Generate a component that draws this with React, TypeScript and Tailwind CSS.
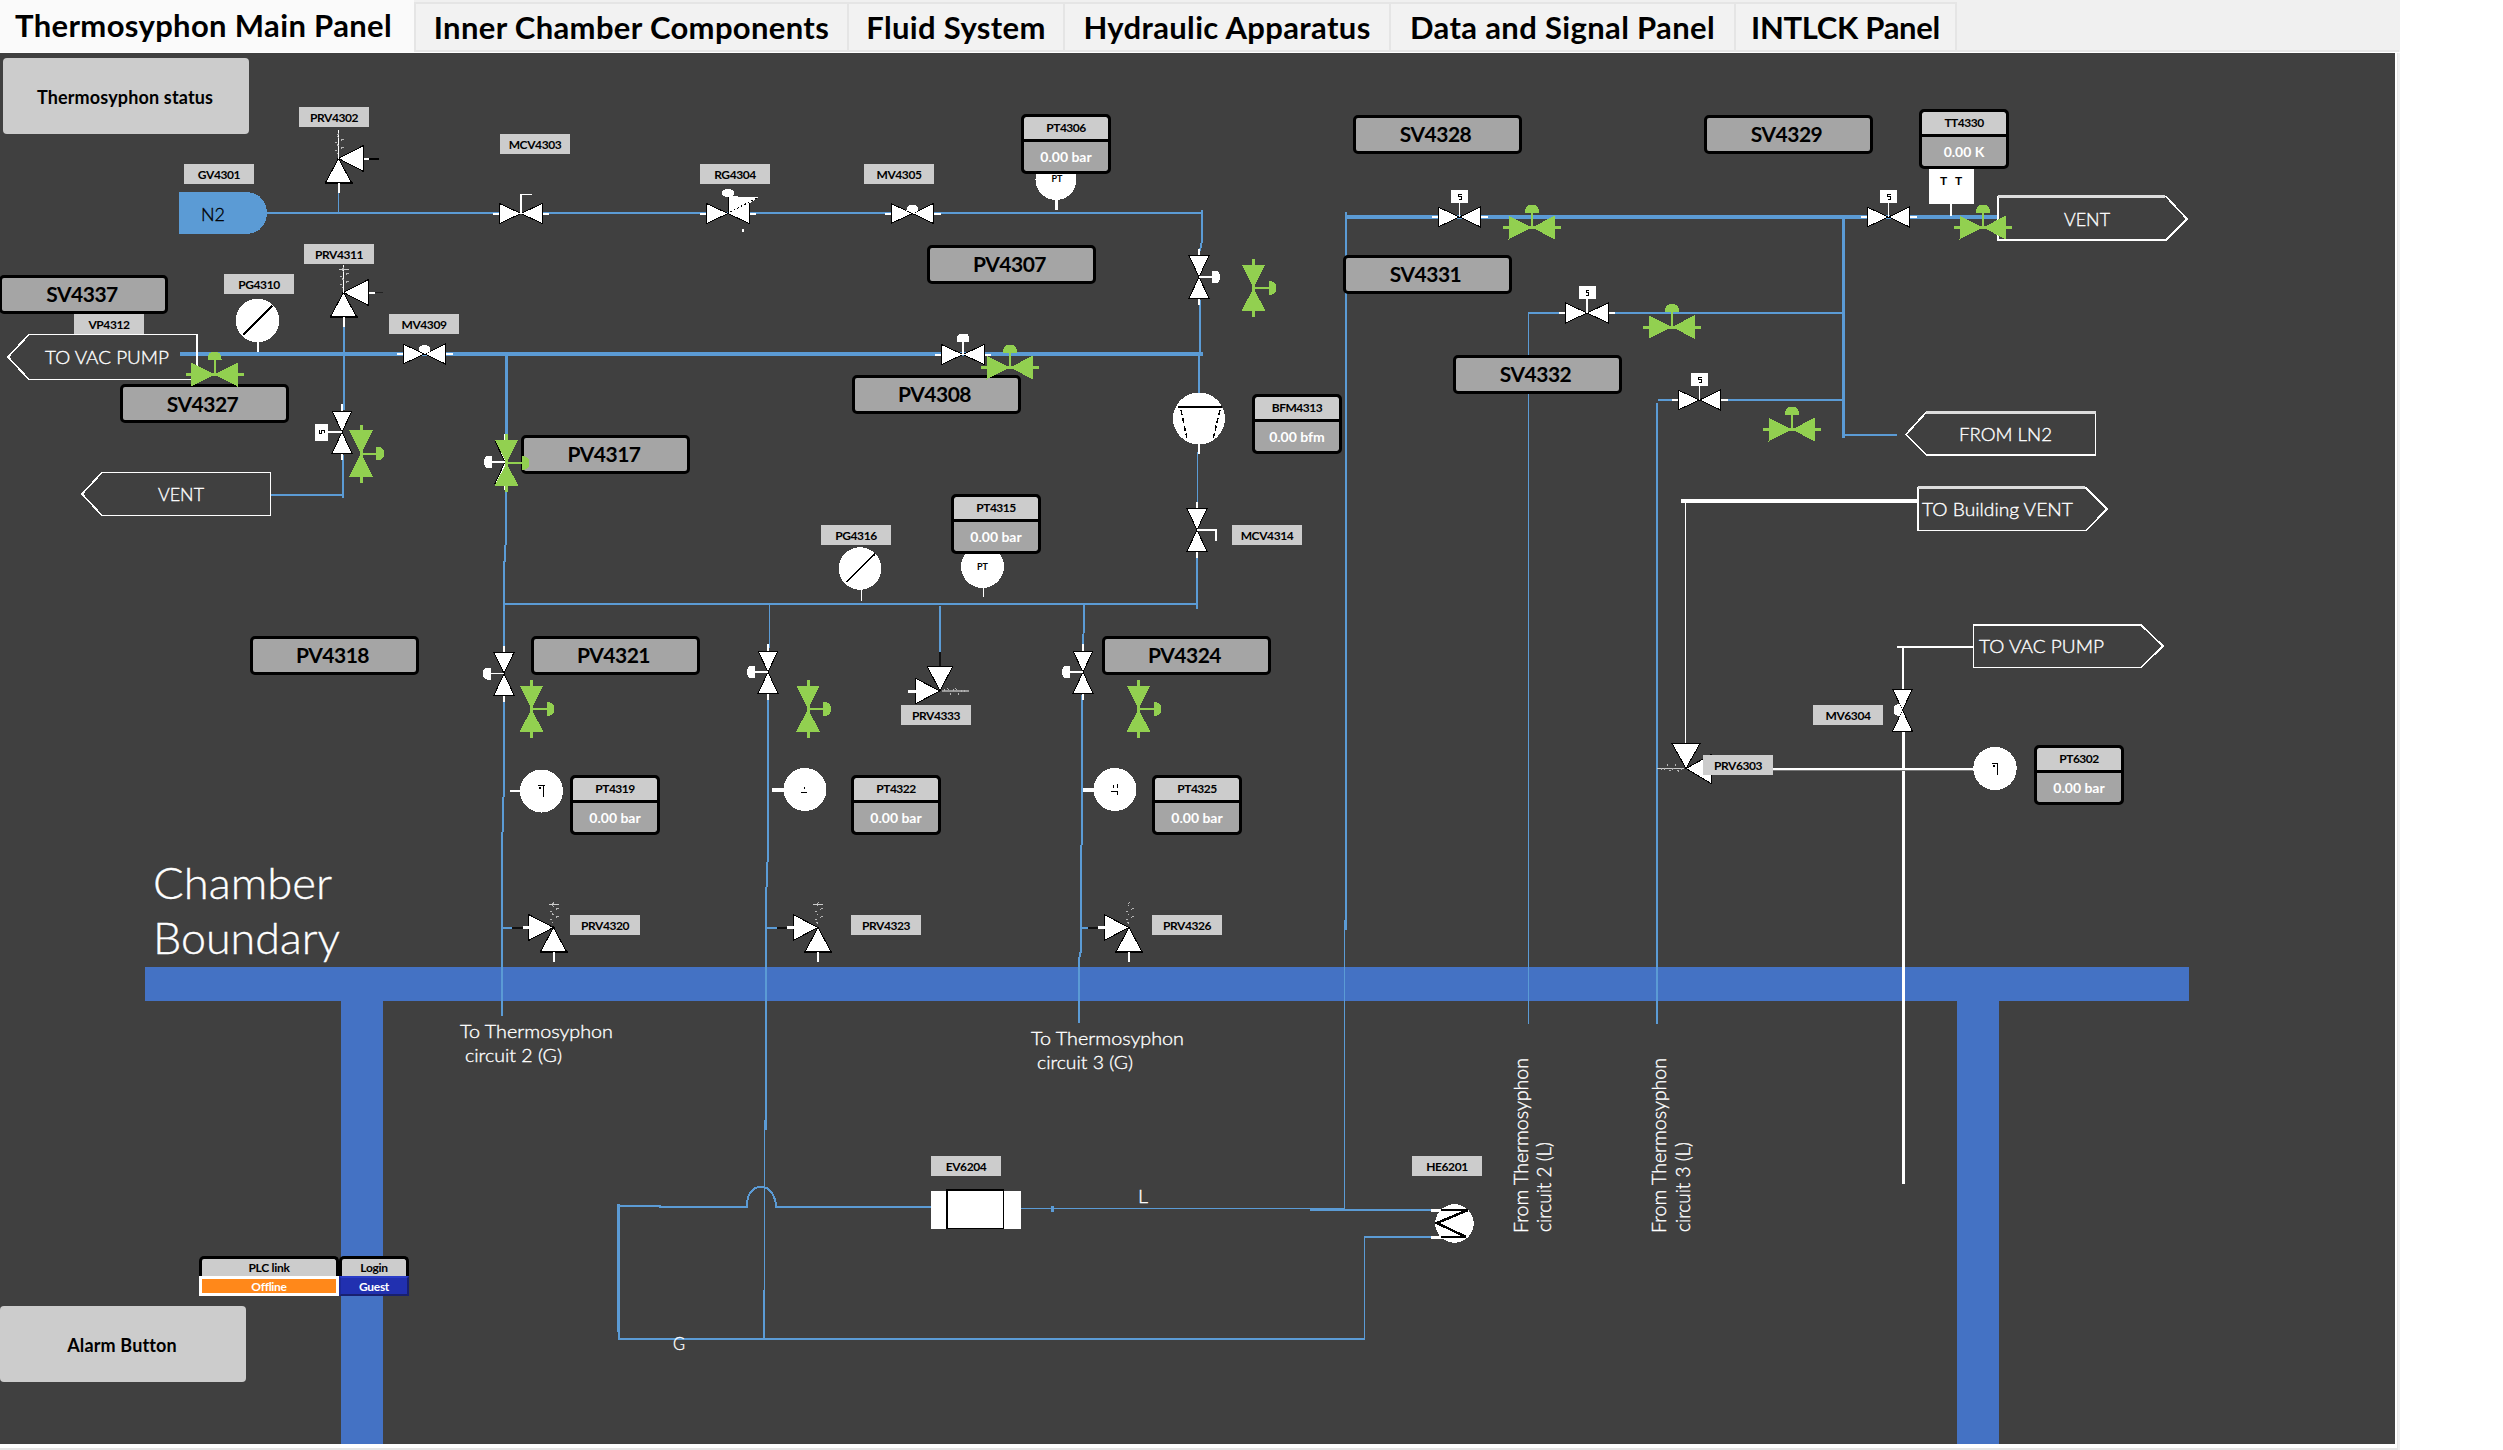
import React from "react";

const TOP = 53;
const PIPE = "#5b9bd5";
const GREEN = "#92d050";
const WALL = "#4472c4";

type P = { x: number; y: number };

/* ---------- HTML nodes placed on the mimic canvas ---------- */

function Tag({ x, y, children }: P & { children: string }) {
  return (
    <div
      className="absolute flex h-5 w-[70px] items-center justify-center bg-[#cccccc] pt-0.5 text-xs font-bold tracking-[-0.4px] text-black"
      style={{ left: x, top: y - TOP }}
    >
      {children}
    </div>
  );
}

function ValveButton({ x, y, children }: P & { children: string }) {
  return (
    <button
      className="absolute flex h-[39px] w-[169px] items-center justify-center rounded-[5px] border-[3px] border-black bg-[#a5a5a5] pr-[3px] text-[21px] font-bold tracking-[-0.5px] text-black"
      style={{ left: x, top: y - TOP }}
    >
      {children}
    </button>
  );
}

function Readout({ x, y, name, value }: P & { name: string; value: string }) {
  return (
    <div
      className="absolute flex h-[60px] w-[90px] flex-col gap-[3px] overflow-hidden rounded-[5px] border-[3px] border-black bg-black text-center font-bold"
      style={{ left: x, top: y - TOP }}
    >
      <div className="flex h-[22px] items-center justify-center rounded-t-[2px] bg-[#cccccc] text-xs tracking-[-0.5px] text-black">{name}</div>
      <div className="flex flex-1 items-center justify-center rounded-b-[2px] bg-[#a5a5a5] text-sm text-white">{value}</div>
    </div>
  );
}

/* ---------- SVG symbols ---------- */

type Head = "none" | "dome" | "box" | "cap" | "lever";

function Valve({ x, y, rot = 0, head = "none" }: P & { rot?: number; head?: Head }) {
  return (
    <g transform={`translate(${x} ${y}) rotate(${rot})`}>
      <path d="M-28 0H-20M20 0H28" stroke="#fff" strokeWidth="2" />
      <path d="M-21.500 -10V10L0 0L21 -10V10L0 0Z" fill="#fff" stroke="#000" strokeWidth="1" />
      <path d="M-20.500 -9V9L-1 0ZM20.500 -9V9L1 0Z" fill="#fff" />
      {head === "dome" && (
        <>
          <path d="M0 0V-14" stroke="#fff" strokeWidth="1.500" />
          <path d="M-6 -13V-17Q-6 -21 0 -21Q6 -21 6 -17V-13Z" fill="#fff" />
        </>
      )}
      {head === "cap" && <path d="M-6 -3Q-6 -9 0 -9Q6 -9 6 -3L0 0Z" fill="#fff" />}
      {head === "box" && (
        <>
          <path d="M0 0V-14" stroke="#fff" strokeWidth="1.500" />
          <rect x="-8.500" y="-27" width="17" height="13" fill="#fff" />
          <path d="M2 -23H-1V-20.500H1.500V-18H-1" fill="none" stroke="#000" strokeWidth="1" />
        </>
      )}
      {head === "lever" && <path d="M0 0V-19H10.500" fill="none" stroke="#fff" strokeWidth="1.500" />}
    </g>
  );
}

function GreenValve({ x, y, rot = 0 }: P & { rot?: number }) {
  return (
    <g transform={`translate(${x} ${y}) rotate(${rot})`} fill={GREEN} stroke="none">
      <path d="M-23.500 -12V12L0 0L23 -12V12L0 0Z" />
      <rect x="-29" y="-1.500" width="58" height="3" />
      <rect x="-1" y="-16" width="2" height="16" />
      <path d="M-7 -15Q-7 -23 0 -23Q7 -23 7 -15Z" />
    </g>
  );
}

/* Relief valve: inlet triangle below the apex, outlet triangle to the given side. */
function Relief({ x, y, side, tail }: P & { side: 1 | -1; tail: React.ReactNode }) {
  return (
    <g transform={`translate(${x} ${y})`}>
      <path d="M0 0L-13 24H13Z" fill="#fff" stroke="#000" strokeWidth="1" />
      <path d="M-14 24.500H14" stroke="#000" strokeWidth="1.500" />
      <path d="M0 1L-12 23.500H12Z" fill="#fff" />
      <path d={side === 1 ? "M0 0L25 -13V13Z" : "M0 0L-25 -13V13Z"} fill="#fff" stroke="#000" strokeWidth="1" />
      <path d="M0 24V34" stroke="#fff" strokeWidth="2" />
      {tail}
    </g>
  );
}

const Spring = ({ cap = false }: { cap?: boolean }) => (
  <g fill="none" stroke="#b5b5b5" strokeWidth="1">
    <path d="M0 -4L-4 -7L4 -11L-4 -15L4 -19L-3 -23L3 -26" strokeDasharray="2 4" />
    {cap && <path d="M-5 -23H5" stroke="#ccc" strokeWidth="1" />}
  </g>
);

function Txt({ x, y, w, size = 18.5, children, fill = "#fff", rot = 0 }: P & { w: number; size?: number; children: string; fill?: string; rot?: number }) {
  return (
    <text
      transform={`translate(${x} ${y}) rotate(${rot})`}
      textLength={w}
      lengthAdjust="spacingAndGlyphs"
      fontSize={size}
      fill={fill}
      stroke={fill}
      strokeWidth="0.35"
      className="font-light"
    >
      {children}
    </text>
  );
}

/* [path, width, colour] */
const PIPES: [string, number, string?][] = [
  ["M267 213H1202", 2],
  ["M338.500 190V213", 1.5],
  ["M1202 210V240L1200 251M1200 300L1199.500 353", 2],
  ["M180 354H1203", 4],
  ["M1199 354V394", 2],
  ["M1197.500 452V502", 1],
  ["M1196.500 551V609", 2],
  ["M343.500 326V410M342.500 455V498", 2],
  ["M271 495H343", 2],
  ["M506.500 355V434", 3],
  ["M505.500 434V545L504 570V780L502 850V1016", 2],
  ["M504 604H1196", 2],
  ["M769.500 604V648", 1],
  ["M768 695V850L766 900V1130", 2],
  ["M764.500 1120V1310", 1],
  ["M763.500 1290V1339", 2],
  ["M940 606V652", 2],
  ["M940 652V666", 2, "#111"],
  ["M1084 604V620L1083 648", 2],
  ["M1082 695V840L1081 850V950L1079 960V1023", 2],
  ["M502 928H512M767 928H777M1081 928H1088", 2],
  ["M512 928H524M777 928H787M1088 928H1099", 2, "#111"],
  ["M1344.500 217H1997", 4],
  ["M1346 212V930", 2],
  ["M1344.500 920V1209", 1],
  ["M1843.500 217V438", 3],
  ["M1843 435H1897", 2],
  ["M1528.500 313V1024", 1],
  ["M1528 313H1843", 2],
  ["M1657 403V1024", 2],
  ["M1658 400H1843", 2],
  ["M618 1206H660V1207H746M776 1207H931", 2],
  ["M746.500 1208C747 1194 752 1187 761 1187C770 1187 775 1194 776.500 1208", 2],
  ["M1021 1208.500H1345", 1],
  ["M1052.500 1205.500V1211.500", 3],
  ["M1310 1209.500H1431", 2],
  ["M618.500 1204V1325L619 1339H1365", 2.5],
  ["M1364.500 1339V1237", 1],
  ["M1364 1237H1431", 2],
  ["M1680.500 501H1917", 4, "#fff"],
  ["M1685.500 503V744", 1, "#fff"],
  ["M1897 647H1973M1903 647V690", 2, "#fff"],
  ["M1903.500 731V1184", 3, "#fff"],
  ["M1773 769H1974", 2, "#fff"],
  ["M1773 770.500H1974", 1, "#777"],
];

const FLAGS: string[] = [
  "M8 357L29 334.500H197V379.500H29Z",
  "M82 494L102 472.500H270.500V515.500H102Z",
  "M1998 196.500H2166L2187 219L2166 240H1998Z",
  "M1906 434.500L1926.500 412H2095.500V455H1926.500Z",
  "M1918 488H2086L2107 509L2086 530.500H1918Z",
  "M1973.500 625H2141L2163 646L2141 667.500H1973.500Z",
];

function Drawing() {
  return (
    <svg viewBox={`0 ${TOP} 2395 1391`} width="2395" height="1391" className="block" shapeRendering="crispEdges">
      <g fill={WALL}>
        <rect x="145" y="967" width="2044" height="34" />
        <rect x="341" y="1001" width="42" height="443" />
        <rect x="1957" y="1001" width="42" height="443" />
      </g>
      {PIPES.map(([d, w, c]) => (
        <path key={d} d={d} fill="none" stroke={c ?? PIPE} strokeWidth={w} />
      ))}
      <path d="M179 192H245C259 192 267 201 267 213C267 225 259 234 245 234H179Z" fill={PIPE} />
      {FLAGS.map((d) => (
        <path key={d} d={d} fill="none" stroke="#fff" strokeWidth="1.700" />
      ))}
      <path d="M1998 196H2165M1926 412H2096M1918 487H2085" stroke="#ddd" strokeWidth="3" />

      <Valve x={521} y={213.5} head="lever" />
      <Valve x={728} y={213.5} />
      <path d="M728 212V196L758 197.500L747 205V220L729 213Z" fill="#fff" />
      <ellipse cx="728" cy="193" rx="6" ry="4" fill="#fff" />
      <path d="M728.500 197V214" stroke="#000" strokeWidth="1.500" />
      <path d="M730 212L757 198" stroke="#000" strokeWidth="1" strokeDasharray="2 2" />
      <rect x="742" y="229" width="2" height="3" fill="#fff" />
      <Valve x={912.5} y={213.5} head="cap" />
      <Valve x={424.5} y={354} head="cap" />
      <Valve x={963} y={354.5} head="dome" />
      <Valve x={1459.5} y={217} head="box" />
      <Valve x={1587} y={313} head="box" />
      <Valve x={1699.5} y={400} head="box" />
      <Valve x={1888.5} y={217} head="box" />
      <Valve x={342} y={432} rot={-90} head="box" />
      <Valve x={505} y={462} rot={-90} head="dome" />
      <Valve x={1199} y={277} rot={90} head="dome" />
      <Valve x={504} y={673.5} rot={-90} head="dome" />
      <Valve x={768} y={672} rot={-90} head="dome" />
      <Valve x={1083} y={672} rot={-90} head="dome" />
      <Valve x={1197} y={530} rot={90} head="lever" />
      <Valve x={1902.5} y={710} rot={-90} head="cap" />

      <Relief x={338.5} y={158.5} side={1} tail={<><path d="M25 0H30" stroke="#fff" strokeWidth="2" /><path d="M30 0H40" stroke="#000" strokeWidth="2" /><path d="M0 0V-29" stroke="#fff" strokeWidth="1" /><Spring /></>} />
      <Relief x={343.5} y={292.5} side={1} tail={<><path d="M25 0H31" stroke="#fff" strokeWidth="2" /><path d="M31 0H39" stroke="#222" strokeWidth="1.500" /><path d="M0 0V-28" stroke="#fff" strokeWidth="1" /><Spring cap /></>} />
      {[553.5, 818, 1129].map((x) => (
        <Relief key={x} x={x} y={927.5} side={-1} tail={<><path d="M-31 0H-24" stroke="#fff" strokeWidth="3" /><Spring cap={x < 1000} /></>} />
      ))}
      <g transform="translate(940 691)">
        <path d="M0 0L-13 -25H13Z" fill="#fff" stroke="#000" strokeWidth="1" />
        <path d="M0 0L-25 -13V13Z" fill="#fff" stroke="#000" strokeWidth="1" />
        <path d="M-32 0H-24" stroke="#fff" strokeWidth="3" />
        <path d="M2 0H29" stroke="#999" strokeWidth="1.500" />
        <g transform="rotate(90)"><Spring /></g>
      </g>
      <g transform="translate(1686 768.500)">
        <path d="M0 0L-14 -25H14Z" fill="#fff" stroke="#000" strokeWidth="1" />
        <path d="M0 0L25 -14V15Z" fill="#fff" stroke="#000" strokeWidth="1" />
        <path d="M-29 0H-2" stroke="#ccc" strokeWidth="1.500" />
        <g transform="rotate(-90)"><Spring /></g>
      </g>

      <g fill="#fff" stroke="none">
        <circle cx="257.500" cy="320.500" r="21.700" />
        <rect x="257" y="340" width="2" height="12" />
        <circle cx="860" cy="568.500" r="21.300" />
        <rect x="861" y="588" width="1" height="13" />
        <circle cx="1056" cy="179.500" r="20.500" />
        <rect x="1055" y="198" width="3" height="12" />
        <circle cx="982.500" cy="566.500" r="21.500" />
        <rect x="983" y="586" width="1" height="11" />
        <circle cx="541.500" cy="791" r="21.500" />
        <rect x="510" y="790" width="12" height="2" />
        <circle cx="805" cy="789.500" r="21.500" />
        <rect x="772" y="788" width="14" height="4" />
        <circle cx="1115" cy="789.500" r="21.500" />
        <rect x="1083" y="788" width="14" height="4" />
        <circle cx="1995" cy="768.500" r="21.700" />
        <rect x="1929" y="169" width="45" height="35" />
        <rect x="1950" y="204" width="2" height="12" />
        <circle cx="1199" cy="418.500" r="26" />
        <rect x="1198" y="444" width="2" height="10" />
        <circle cx="1454.500" cy="1223.500" r="19.300" />
        <rect x="1431" y="1209" width="12" height="3" />
        <rect x="1431" y="1236" width="12" height="3" />
        <rect x="931" y="1191" width="90" height="38" />
      </g>
      <g fill="none" stroke="#000">
        <path d="M243 335L272 306M846.500 582L875 554" strokeWidth="1.500" />
        <path d="M1178 407H1222" strokeWidth="2" />
        <path d="M1181 410L1187 439M1220 410L1213 439" strokeWidth="1.500" strokeDasharray="5 3" />
        <path d="M1441 1210H1468L1437 1223L1466 1237H1441" strokeWidth="2.500" />
        <path d="M947 1190H1003.500V1228.500H947Z" strokeWidth="1.500" />
        <path d="M538 785.500H545M543.500 785V797M540 787V789" strokeWidth="1.200" />
        <path d="M1991.500 763.500H1998M1997.500 763V775M1994 765V767" strokeWidth="1.200" />
        <path d="M801 792.500H807M804.500 787V789" strokeWidth="1" />
        <path d="M1113.500 785V788M1117.500 784V788M1111 791.500H1118M1117.500 791V795" strokeWidth="1" />
      </g>
      <g fontSize="9" fontWeight="700" textAnchor="middle">
        <text x="1057" y="181.500">PT</text>
        <text x="982.500" y="570">PT</text>
        <text x="1943.500" y="185" fontSize="12">T</text>
        <text x="1958.500" y="185" fontSize="12">T</text>
      </g>

      <Txt x={201} y={221} w={24} fill="#000">N2</Txt>
      <Txt x={45} y={364} w={124}>TO VAC PUMP</Txt>
      <Txt x={158} y={501} w={46}>VENT</Txt>
      <Txt x={2064} y={226} w={46}>VENT</Txt>
      <Txt x={1959} y={441} w={93}>FROM LN2</Txt>
      <Txt x={1922} y={516} w={151}>TO Building VENT</Txt>
      <Txt x={1979} y={653} w={125}>TO VAC PUMP</Txt>
      <Txt x={153} y={899} w={179} size={44}>Chamber</Txt>
      <Txt x={153} y={954} w={187} size={44}>Boundary</Txt>
      <Txt x={460} y={1037.5} w={153}>To Thermosyphon</Txt>
      <Txt x={465} y={1062} w={97}>circuit 2 (G)</Txt>
      <Txt x={1031} y={1044.5} w={153}>To Thermosyphon</Txt>
      <Txt x={1037} y={1069} w={96}>circuit 3 (G)</Txt>
      <Txt x={1528} y={1233} w={175} size={19.5} rot={-90}>From Thermosyphon</Txt>
      <Txt x={1551} y={1232} w={90} size={19.5} rot={-90}>circuit 2 (L)</Txt>
      <Txt x={1666} y={1233} w={175} size={19.5} rot={-90}>From Thermosyphon</Txt>
      <Txt x={1689.5} y={1232} w={90} size={19.5} rot={-90}>circuit 3 (L)</Txt>
      <Txt x={1138} y={1203} w={10}>L</Txt>
      <Txt x={673} y={1350} w={12}>G</Txt>
    </svg>
  );
}

const TAGS: [string, number, number][] = [
  ["PRV4302", 299, 107], ["MCV4303", 500, 134], ["GV4301", 184, 164], ["PRV4311", 304, 244],
  ["PG4310", 224, 274], ["VP4312", 74, 314], ["MV4309", 389, 314], ["RG4304", 700, 164],
  ["MV4305", 864, 164], ["PG4316", 821, 525], ["PRV4333", 901, 705], ["MCV4314", 1232, 525],
  ["PRV4320", 570, 915], ["PRV4323", 851, 915], ["PRV4326", 1152, 915], ["HE6201", 1412, 1156],
  ["EV6204", 931, 1156], ["MV6304", 1813, 705], ["PRV6303", 1703, 755],
];

const BUTTONS: [string, number, number][] = [
  ["SV4337", -1, 274.5], ["SV4327", 119.5, 384], ["PV4317", 521, 434.5], ["PV4307", 926.5, 244.5],
  ["PV4308", 851.5, 374.5], ["SV4328", 1352.5, 114.5], ["SV4329", 1703.5, 114.5], ["SV4331", 1342.5, 254.5],
  ["SV4332", 1452.5, 354.5], ["PV4318", 249.5, 635.5], ["PV4321", 530.5, 635.5], ["PV4324", 1101.5, 635.5],
];

const READOUTS: [string, string, number, number][] = [
  ["PT4306", "0.00 bar", 1021, 114], ["TT4330", "0.00 K", 1919, 109], ["BFM4313", "0.00 bfm", 1252, 394],
  ["PT4315", "0.00 bar", 951, 494], ["PT4319", "0.00 bar", 570, 775], ["PT4322", "0.00 bar", 851, 775],
  ["PT4325", "0.00 bar", 1152, 775], ["PT6302", "0.00 bar", 2034, 745],
];

const GREENS: [number, number, number][] = [
  [214.5, 374.5, 0], [1010, 367.5, 0], [1532, 227.5, 0], [1672, 327, 0], [1792, 429.5, 0], [1983, 227.5, 0],
  [361, 453.5, 90], [506.5, 463, 90], [1253.5, 288, 90], [531.5, 709, 90], [808, 709, 90], [1138.5, 709, 90],
];

function Tab({ className, children }: { className: string; children: string }) {
  return (
    <div className={`mt-0.5 flex h-[50px] items-center justify-center border-2 border-l-0 border-[#e5e5e5] bg-[#f2f2f2] ${className}`}>
      <span className="whitespace-nowrap">{children}</span>
    </div>
  );
}

export default function App() {
  return (
    <div className="h-[1450px] w-[2503px] overflow-hidden bg-white font-['Lato','Open_Sans',sans-serif]">
      <div className="flex h-full w-[2400px] flex-col bg-[#f0f0f0]">
        <nav className="flex h-[53px] shrink-0 border-b border-white text-[31px] leading-none font-bold tracking-[0.35px] text-black">
          <div className="flex w-[414px] items-center bg-[#fafafa] pb-0.5 pl-[15px]">
            <span className="whitespace-nowrap">Thermosyphon Main Panel</span>
          </div>
          <Tab className="w-[435px] border-l-2">Inner Chamber Components</Tab>
          <Tab className="w-[216px]">Fluid System</Tab>
          <Tab className="w-[326px]">Hydraulic Apparatus</Tab>
          <Tab className="w-[345px]">Data and Signal Panel</Tab>
          <Tab className="w-[221px] tracking-[-0.3px]">INTLCK Panel</Tab>
          <div className="mt-[50px] h-0.5 w-[442px] bg-[#e5e5e5]" />
        </nav>
        <main className="w-[2398px] border-r border-b-2 border-[#e5e5e5] bg-white pr-0.5 pb-1">
          <div className="relative h-[1391px] w-[2395px] overflow-hidden bg-[#404040]">
            <Drawing />
            {TAGS.map(([t, x, y]) => <Tag key={t} x={x} y={y}>{t}</Tag>)}
            {BUTTONS.map(([t, x, y]) => <ValveButton key={t} x={x} y={y}>{t}</ValveButton>)}
            {READOUTS.map(([n, v, x, y]) => <Readout key={n} x={x} y={y} name={n} value={v} />)}
            <button className="absolute top-[5px] left-[3px] flex h-[76px] w-[246px] items-center justify-center rounded bg-[#cccccc] pt-0.5 pr-0.5 text-lg font-bold tracking-[0.15px] text-black">
              Thermosyphon status
            </button>
            <button className="absolute top-[1253px] left-0 flex h-[76px] w-[246px] items-center justify-center rounded bg-[#cccccc] pt-0.5 pr-0.5 text-lg font-bold tracking-[0.15px] text-black">
              Alarm Button
            </button>
            <div className="absolute top-[1203px] left-[199px] grid h-10 w-[210px] grid-cols-[140px_70px] grid-rows-2 text-xs leading-none font-bold tracking-[-0.3px]">
              <div className="flex items-center justify-center rounded-t-[5px] border-x-[3px] border-t-[3px] border-black bg-[#cccccc] text-black">PLC link</div>
              <div className="flex items-center justify-center rounded-t-[5px] border-x-[3px] border-t-[3px] border-black bg-[#cccccc] text-black">Login</div>
              <div className="flex items-center justify-center border-[3px] border-white bg-[#ff881a] pt-0.5 text-white">Offline</div>
              <div className="flex items-center justify-center border-2 border-t-[#2a3cc8] border-r-[#18206f] border-b-[#18206f] border-l-[#1c2a9a] bg-[#2130b0] pt-0.5 text-white">Guest</div>
            </div>
            <svg viewBox={`0 ${TOP} 2395 1391`} width="2395" height="1391" className="pointer-events-none absolute inset-0" shapeRendering="crispEdges">
              {GREENS.map(([x, y, r]) => <GreenValve key={`${x}-${y}`} x={x} y={y} rot={r} />)}
            </svg>
          </div>
        </main>
      </div>
    </div>
  );
}
